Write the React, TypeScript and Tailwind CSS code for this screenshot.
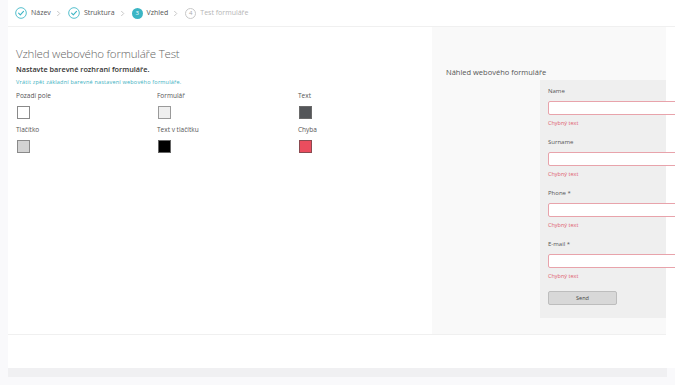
import React from "react";

const teal = "#3bb5c4";

const Check = () => (
  <svg width="12" height="12" viewBox="0 0 14 14" className="shrink-0">
    <circle cx="7" cy="7" r="6.2" fill="none" stroke={teal} strokeWidth="1" />
    <path d="M4.2 7.2 L6.2 9.1 L9.9 5.2" fill="none" stroke={teal} strokeWidth="1.3" strokeLinecap="round" strokeLinejoin="round" />
  </svg>
);

const Chevron = () => (
  <svg width="5" height="7" viewBox="0 0 6 8" className="ml-[5px] mr-[7px] shrink-0">
    <path d="M1.5 1 L4.5 4 L1.5 7" fill="none" stroke="#b5b5b5" strokeWidth="0.9" />
  </svg>
);

const swatches = [
  { label: "Pozadí pole", color: "bg-white", border: "border-[#8a8a8a]" },
  { label: "Formulář", color: "bg-[#efefef]", border: "border-[#9a9a9a]" },
  { label: "Text", color: "bg-[#545659]", border: "border-[#6a6a6a]" },
  { label: "Tlačítko", color: "bg-[#d3d3d3]", border: "border-[#8a8a8a]" },
  { label: "Text v tlačítku", color: "bg-black", border: "border-[#666]" },
  { label: "Chyba", color: "bg-[#ea4d5e]", border: "border-[#8a4a50]" },
];

const fields = ["Name", "Surname", "Phone *", "E-mail *"];

export default function App() {
  return (
    <div
      className="w-[675px] h-[385px] overflow-hidden bg-[#f9f9fb] pl-[8px]"
      style={{ fontFamily: '"Open Sans", "Noto Sans", sans-serif' }}
    >
      <div className="w-[667px] bg-white">
        {/* steps */}
        <div className="h-[27px] flex items-center pl-[7px] border-b border-[#f0f0f0] text-[7px]">
          <Check />
          <span className="ml-[4px] text-[#555]">Název</span>
          <Chevron />
          <Check />
          <span className="ml-[4px] text-[#555]">Struktura</span>
          <Chevron />
          <span className="w-[11px] h-[11px] rounded-full bg-[#3bb5c4] text-white text-[6px] flex items-center justify-center">3</span>
          <span className="ml-[4px] text-[#555]">Vzhled</span>
          <Chevron />
          <span className="w-[11px] h-[11px] rounded-full border border-[#c8c8c8] text-[#aaa] text-[6px] flex items-center justify-center">4</span>
          <span className="ml-[4px] text-[#b5b5b5]">Test formuláře</span>
        </div>

        <div className="flex w-[658px] h-[308px] border-b border-[#f0f0f0]">
          {/* left */}
          <div className="w-[424px] pl-[8px] pt-[19px]">
            <h1 className="text-[11.5px] font-light text-[#666] leading-[16px] tracking-[-0.2px]">
              Vzhled webového formuláře Test
            </h1>
            <p className="mt-[1px] text-[7.3px] font-semibold text-[#333] leading-[12px]">
              Nastavte barevné rozhraní formuláře.
            </p>
            <p className="mt-[2px] text-[5.5px] tracking-[0.2px] text-[#3bb0c0] leading-[10px]">
              Vrátit zpět základní barevné nastavení webového formuláře.
            </p>
            <div className="mt-[4px] grid grid-cols-[141px_141px_100px] gap-y-[6px]">
              {swatches.map((s) => (
                <div key={s.label}>
                  <div className="text-[6.5px] text-[#555] leading-[10px]">{s.label}</div>
                  <div className={`mt-[5px] ml-[1px] w-[13px] h-[13px] border ${s.color} ${s.border}`} />
                </div>
              ))}
            </div>
          </div>

          {/* right preview */}
          <div className="flex-1 bg-[#f9f9f9] pt-[40px] pl-[14px]">
            <div className="text-[7.5px] text-[#555] leading-[10px]">Náhled webového formuláře</div>
            <div className="mt-[3px] ml-[94px] w-[126px] h-[238px] bg-[#efefef] pl-[8px] pt-[7px]">
              {fields.map((f) => (
                <div key={f} className="mb-[11px]">
                  <div className="text-[6px] text-[#555] leading-[8px]">{f}</div>
                  <div className="mt-[6px] w-[140px] h-[14px] bg-white border border-[#e8a3ab] rounded-[2px]" />
                  <div className="mt-[4px] text-[5.5px] text-[#e06070] leading-[8px]">Chybný text</div>
                </div>
              ))}
              <div className="w-[69px] h-[14px] bg-[#d8d8d8] border border-[#bdbdbd] rounded-[2px] flex items-center justify-center text-[5.5px] text-[#444]">
                Send
              </div>
            </div>
          </div>
        </div>
        <div className="h-[33px]" />
      </div>
      <div className="w-[659px] h-[9px] bg-[#f0f0f2]" />
    </div>
  );
}
